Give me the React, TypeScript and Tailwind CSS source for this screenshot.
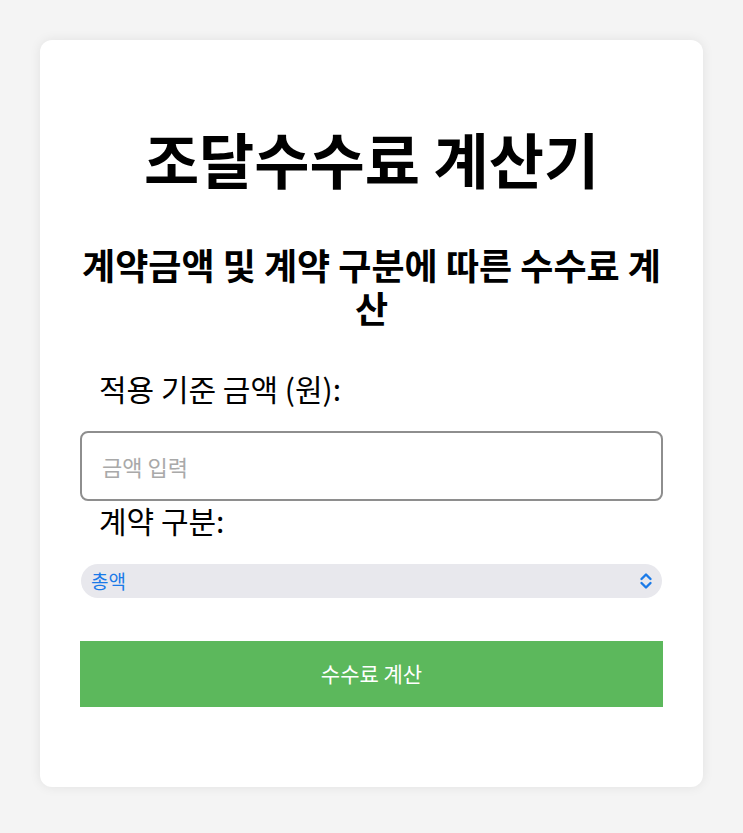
import React, { useState } from 'react';

const FONT = "font-['Noto_Sans_CJK_KR','Noto_Sans',sans-serif]";

export default function App() {
  const [amount, setAmount] = useState('');
  const [kind, setKind] = useState('total');

  return (
    <div className={`min-h-[833px] bg-[#f4f4f4] px-10 pt-10 pb-[46px] ${FONT}`}>
      <div className="bg-white rounded-xl shadow-[0_0_12px_rgba(0,0,0,0.08)] px-10 pt-[82px] pb-[80px] flex flex-col">
        {/* Title */}
        <h1 className="text-center text-[60px] font-bold leading-[72px] text-black">조달수수료 계산기</h1>
        <h2 className="mt-[49px] text-center text-[36px] font-bold leading-[43px] text-black">
          계약금액 및 계약 구분에 따른 수수료 계산
        </h2>

        {/* Amount */}
        <label className="mt-[42px] pl-[19px] text-[30px] leading-[34px] text-black">적용 기준 금액 (원):</label>
        <input
          value={amount}
          onChange={(e) => setAmount(e.target.value)}
          placeholder="금액 입력"
          className="mt-[26px] h-[70px] w-full rounded-lg border-2 border-[#8e8e8e] px-5 text-[22px] text-black placeholder:text-[#a9a9a9] outline-none"
        />

        {/* Kind */}
        <label className="mt-[2px] pl-[19px] text-[30px] leading-[34px] text-black">계약 구분:</label>
        <div className="relative mt-[27px] mx-px">
          <select
            value={kind}
            onChange={(e) => setKind(e.target.value)}
            className="h-[34px] w-full appearance-none rounded-full bg-[#e8e8ed] pl-[10px] pr-8 text-[19px] text-[#1a7ae8] outline-none"
          >
            <option value="total">총액</option>
            <option value="unit">단가</option>
          </select>
          <svg
            className="pointer-events-none absolute right-[9px] top-1/2 -translate-y-1/2"
            width="14" height="18" viewBox="0 0 14 18" fill="none"
            stroke="#1a7ae8" strokeWidth="2.4" strokeLinecap="round" strokeLinejoin="round"
          >
            <path d="M2.5 7 L7 2.5 L11.5 7" />
            <path d="M2.5 11 L7 15.5 L11.5 11" />
          </svg>
        </div>

        <button className="mt-[43px] h-[66px] w-full bg-[#5cb85c] text-[21px] text-white">수수료 계산</button>
      </div>
    </div>
  );
}
